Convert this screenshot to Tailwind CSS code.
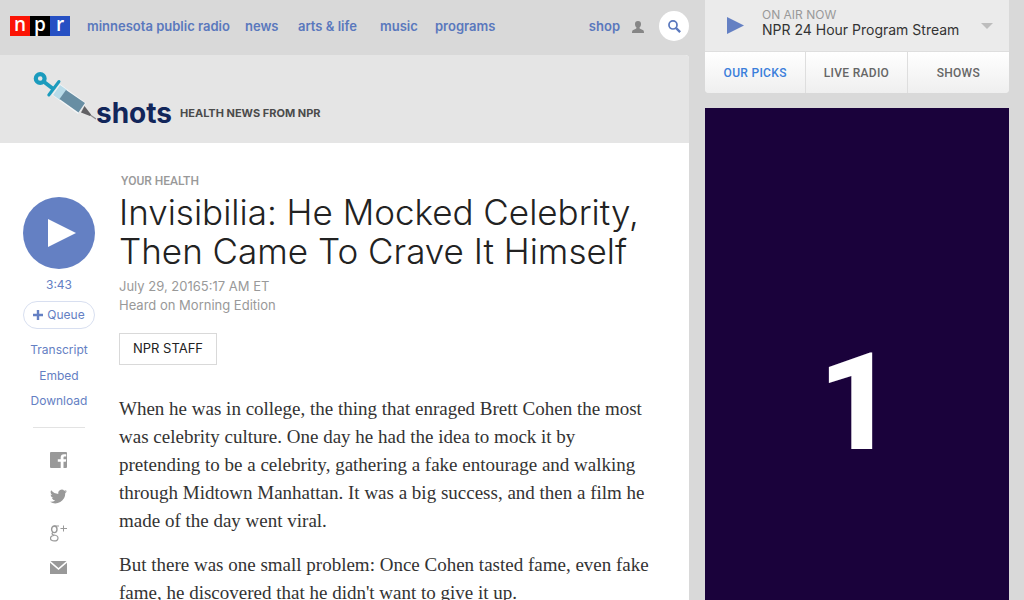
<!DOCTYPE html>
<html lang="en">
<head>
<meta charset="utf-8">
<meta name="viewport" content="width=device-width, initial-scale=1">
<title>Invisibilia: He Mocked Celebrity, Then Came To Crave It Himself : Shots - Health News : NPR</title>
<script src="https://cdn.jsdelivr.net/npm/@tailwindcss/browser@4"></script>
</head>
<body class="flex h-screen overflow-hidden bg-[#d9d9d9] pr-[15px] font-['Inter',sans-serif]">
<div class="flex min-w-0 flex-1 flex-col">
  <header class="flex h-[55px] shrink-0 items-center pb-[3px] pl-[10px] text-[13px] font-semibold text-[#5a78bd]">
    <a href="#" aria-label="NPR home" class="flex h-5 text-center font-['Open_Sans',sans-serif] text-[19px] leading-[17px] font-semibold text-white">
      <span class="w-5 bg-[#fb1405]">n</span><span class="w-5 bg-black">p</span><span class="w-5 bg-[#2650c3]">r</span>
    </a>
    <nav class="ml-[17px] flex flex-1 items-center pt-[2px]" aria-label="Main">
      <a href="#" class="w-[158px]">minnesota public radio</a>
      <a href="#" class="w-[53px]">news</a>
      <a href="#" class="w-[82px]">arts &amp; life</a>
      <a href="#" class="w-[55px]">music</a>
      <a href="#">programs</a>
      <a href="#" class="ml-auto">shop</a>
    </nav>
    <button type="button" aria-label="Account" class="mr-[15px] ml-3 pt-[2px] text-[#868686]">
      <svg class="h-3 w-3" viewBox="0 0 12 12" fill="currentColor"><path d="M6 0C3.900 0 3 1.200 3 3c0 1.500.5 2.500 1.300 3.300.3.500.2 1.200-.4 1.500L1.200 9C.4 9.400 0 10 0 12h12c0-2-.4-2.600-1.200-3L8.100 7.800c-.6-.3-.7-1-.4-1.500C8.500 5.500 9 4.500 9 3c0-1.800-.9-3-3-3z"/></svg>
    </button>
    <button type="button" aria-label="Search" class="flex size-[30px] items-center justify-center rounded-full bg-white">
      <svg class="size-[13px]" viewBox="0 0 12 12" fill="none" stroke="currentColor"><circle cx="4.600" cy="4.600" r="3.700" stroke-width="1.600"/><path d="M7.500 7.500l3.700 3.700" stroke-width="2.200"/></svg>
    </button>
  </header>
  <main class="flex-1 rounded-tr bg-white">
    <div class="flex h-[88px] rounded-tr bg-[#e5e5e5] pl-[33px]">
      <svg class="mt-4 h-[50px] w-[63px] shrink-0" viewBox="33 71 63 50" aria-hidden="true">
        <path d="M86 112l10 7" stroke="#8b8b8d" stroke-width="1.200"/>
        <path d="M60 84l-8 11 26 19 8-11z" fill="#f4f6f7"/>
        <path d="M60 85l7 5-7 10-7-5z" fill="#b9dbe8"/>
        <path d="M66 90l19 13-6.500 9.500L59.500 99z" fill="#688ea3"/>
        <path d="M84.500 106l6.500 8.500-1 1.500-9-3.500z" fill="#626164"/>
        <circle cx="40.200" cy="78.500" r="4.400" fill="none" stroke="#1b9bbd" stroke-width="4.200"/>
        <path d="M43.500 81.500l10.500 8" stroke="#1b9bbd" stroke-width="4"/>
        <path d="M59 81.500L48.800 95" stroke="#1b9bbd" stroke-width="3" stroke-linecap="round"/>
      </svg>
      <div class="flex items-center gap-2 pt-[28px]">
        <a href="#" class="text-[28px] leading-8 font-bold text-[#12265a]">shots</a>
        <span class="text-[11px] leading-4 font-bold text-[#4b4b4b]">HEALTH NEWS FROM NPR</span>
      </div>
    </div>
    <div class="flex">
      <aside class="flex w-[119px] shrink-0 flex-col items-center pt-[54px] pr-px text-[12px] text-[#6480c3]">
        <button type="button" aria-label="Play story" class="flex size-[72px] items-center justify-center rounded-full bg-[#6480c3]">
          <svg class="ml-[6px] h-7 w-7" viewBox="0 0 28 28" fill="#fff"><path d="M0 0l28 14L0 28z"/></svg>
        </button>
        <span class="mt-2 leading-4">3:43</span>
        <button type="button" class="mt-2 flex h-7 w-[72px] items-center justify-center gap-1 rounded-full border border-[#d8dff0]">
          <svg class="size-[10px]" viewBox="0 0 10 10" stroke="currentColor" stroke-width="2.400"><path d="M5 0v10M0 5h10"/></svg>Queue
        </button>
        <a href="#" class="mt-3 leading-[18px]">Transcript</a>
        <a href="#" class="mt-2 leading-[18px]">Embed</a>
        <a href="#" class="mt-[7px] leading-[18px]">Download</a>
        <hr class="mt-[17px] w-[52px] border-[#e3e3e3]">
        <div class="mt-6 flex flex-col items-center pr-[2px] text-[#999]">
          <a href="#" aria-label="Facebook" class="flex h-9 items-start"><svg class="size-[17px]" viewBox="0 0 17 17" fill="currentColor"><path d="M1 0h15q1 0 1 1v14q0 1-1 1h-2.500V9.800h2.300l.4-2.500H13.500V5.800c0-.8.300-1.200 1.200-1.200h1.500V2.200h-2.200c-2.200 0-3.300 1.200-3.300 3.300v1.800H7.800v2.500h2.900V16H1q-1 0-1-1V1q0-1 1-1z"/></svg></a>
          <a href="#" aria-label="Twitter" class="flex h-[37px] items-start"><svg class="size-[17px]" viewBox="0 0 24 24" fill="currentColor"><path d="M24 4.600a10 10 0 0 1-2.800.8 5 5 0 0 0 2.100-2.700 10 10 0 0 1-3.100 1.200 4.900 4.900 0 0 0-8.400 4.500A14 14 0 0 1 1.700 3.200a4.900 4.900 0 0 0 1.500 6.500 5 5 0 0 1-2.200-.6 4.900 4.900 0 0 0 3.900 4.900 5 5 0 0 1-2.200.1 4.900 4.900 0 0 0 4.600 3.400A10 10 0 0 1 0 19.500 14 14 0 0 0 21.500 7.100 10 10 0 0 0 24 4.600z"/></svg></a>
          <a href="#" aria-label="Google Plus" class="flex h-9 items-start"><svg class="size-[17px]" viewBox="0 0 17 17" fill="none" stroke="currentColor"><ellipse cx="4.300" cy="4.300" rx="2.700" ry="3.300" stroke-width="1.400"/><path d="M4 1H9" stroke-width="1"/><path d="M3 7.300C1.300 8.500 2 9.700 4 10c2.500.4 4 1 4 2.900 0 4-7.500 4-7.500.5 0-1.700 1.500-2.700 3.500-2.900" stroke-width="1.200"/><path d="M13.500.5v6M10.500 3.500h6.500" stroke-width="1"/></svg></a>
          <a href="#" aria-label="Email"><svg class="h-[13px] w-[17px]" viewBox="0 0 17 13" fill="currentColor"><path d="M.5 0h16L8.500 7zM0 1.800l8.500 7.300L17 1.800V13H0z"/></svg></a>
        </div>
      </aside>
      <article class="min-w-0 flex-1 pt-[30px]">
        <a href="#" class="ml-[2px] block font-['Roboto',sans-serif] text-[12px] leading-4 font-medium text-[#999]">YOUR HEALTH</a>
        <h1 class="mt-1 text-[35px] leading-[39px] font-light whitespace-nowrap text-[#222]">Invisibilia: He Mocked Celebrity,<br>Then Came To Crave It Himself</h1>
        <div class="mt-[6px] text-[13px] leading-[19px] text-[#999]">
          <p><time>July 29, 2016</time><time>5:17 AM ET</time></p>
          <p>Heard on Morning Edition</p>
        </div>
        <a href="#" class="mt-[18px] flex h-8 w-[98px] items-center justify-center border border-[#d9d9d9] text-[13px] text-[#222]">NPR STAFF</a>
        <div class="mt-[30px] flex flex-col gap-4 font-['Liberation_Serif',serif] text-[19px] leading-7 whitespace-nowrap text-[#333]">
          <p>When he was in college, the thing that enraged Brett Cohen the most<br>was celebrity culture. One day he had the idea to mock it by<br>pretending to be a celebrity, gathering a fake entourage and walking<br>through Midtown Manhattan. It was a big success, and then a film he<br>made of the day went viral.</p>
          <p>But there was one small problem: Once Cohen tasted fame, even fake<br>fame, he discovered that he didn't want to give it up.</p>
        </div>
      </article>
    </div>
  </main>
</div>
<aside class="ml-4 flex w-[304px] shrink-0 flex-col">
  <section class="shrink-0 overflow-hidden rounded-b bg-[#ebebeb]" aria-label="Radio player">
    <div class="flex h-[51px] items-center pr-4 pl-[22px]">
      <button type="button" aria-label="Play live stream"><svg class="h-[17px] w-[17px]" viewBox="0 0 17 17" fill="#6480c3"><path d="M0 0l17 8.500L0 17z"/></svg></button>
      <div class="ml-[18px] flex-1 pb-[6px]">
        <p class="text-[12px] leading-[14px] text-[#999]">ON AIR NOW</p>
        <p class="text-[14px] leading-[15px] text-[#333]">NPR 24 Hour Program Stream</p>
      </div>
      <button type="button" aria-label="More stations"><svg class="h-[6px] w-3" viewBox="0 0 12 6" fill="#bdbdbd"><path d="M0 0h12L6 6z"/></svg></button>
    </div>
    <div class="grid h-[42px] grid-cols-3 divide-x divide-[#dedede] border-t border-[#dedede] bg-linear-to-b from-white to-[#efefef] font-['Roboto',sans-serif] text-[12px] font-medium tracking-wide text-[#666]">
      <button type="button" class="text-[#3b7edb]">OUR PICKS</button>
      <button type="button">LIVE RADIO</button>
      <button type="button">SHOWS</button>
    </div>
  </section>
  <section class="mt-[15px] flex h-[590px] shrink-0 items-center justify-center bg-[#1a023b] font-['Roboto',sans-serif] text-[136px] leading-none font-extrabold text-white" aria-label="Advertisement">1</section>
</aside>
</body>
</html>
